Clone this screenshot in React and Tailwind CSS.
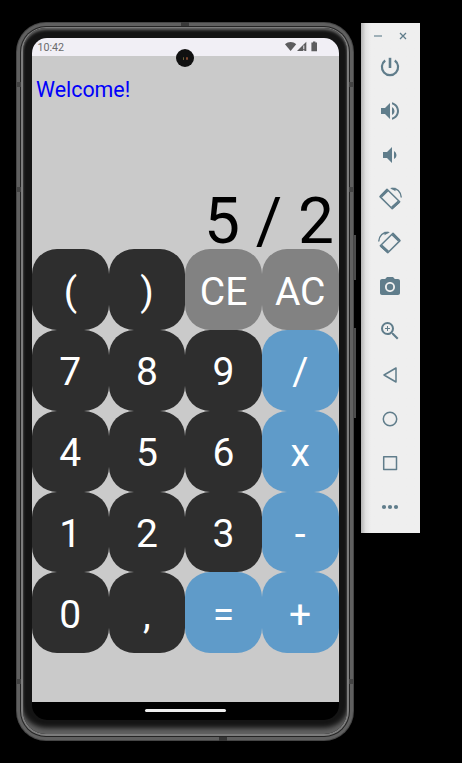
import React from "react";
import { MdVolumeUp, MdVolumeDown, MdPhotoCamera, MdZoomIn } from "react-icons/md";

const KEYS = [
  ["(", ")", "CE", "AC"],
  ["7", "8", "9", "/"],
  ["4", "5", "6", "x"],
  ["1", "2", "3", "-"],
  ["0", ",", "=", "+"],
];

function keyColor(label) {
  if (label === "CE" || label === "AC") return "bg-[#828282]";
  if (["/", "x", "-", "=", "+"].includes(label)) return "bg-[#5f9bc9]";
  return "bg-[#2e2e2e]";
}

function Key({ label }) {
  return (
    <button
      className={`flex items-center justify-center rounded-[25px] pt-[5px] text-[39px] leading-none text-white ${keyColor(label)}`}
    >
      {label}
    </button>
  );
}

function StatusBar() {
  return (
    <div className="flex h-[17.5px] shrink-0 items-center justify-between bg-[#f1eff5] pl-[5.5px] pr-[21px]">
      <span className="pt-[3px] text-[10.7px] leading-none text-[#6a6a6c]">10:42</span>
      <svg width="33" height="11" viewBox="0 0 33 11" fill="#5c5c5e">
        <path d="M0 3.2C3.4.1 7.8.1 11.200 3.200L5.600 10z" />
        <path d="M21.300 .7V10H12z" />
        <path d="M18.300 4.500h1v3.500h-1zM18.300 8.800h1v1.200h-1z" fill="#f1eff5" />
        <path d="M28 .5h2.400v1h1.600v8.700h-5.600V1.500H28z" />
      </svg>
    </div>
  );
}

function Screen() {
  return (
    <div className="flex h-[682px] w-[307px] flex-col overflow-hidden rounded-[15px] bg-black">
      <StatusBar />
      <div className="flex h-[646.5px] shrink-0 flex-col bg-[#cacaca]">
        <div className="pl-[4px] pt-[21.500px] text-[21.400px] leading-[26px] text-[#0000fa]">
          Welcome!
        </div>
        <div className="mt-[80px] h-[66.300px] whitespace-pre pr-[5px] text-right text-[64px] leading-[77px] text-black">
          5 / 2
        </div>
        <div className="grid h-[404px] w-[306.500px] shrink-0 grid-cols-4 grid-rows-5">
          {KEYS.flat().map((k) => (
            <Key key={k} label={k} />
          ))}
        </div>
      </div>
      <div className="flex flex-1 items-center justify-center pb-px">
        <div className="h-[3px] w-[81px] rounded-full bg-[#efefef]" />
      </div>
    </div>
  );
}

function Phone() {
  return (
    <div className="relative ml-[16px] mt-[22px] h-[719px] w-[338px] rounded-[30px] bg-[#464646] p-px">
      <div className="absolute left-[338px] top-[213px] h-[45px] w-[2px] bg-[#4c4c4c]" />
      <div className="absolute left-[338px] top-[306px] h-[90px] w-[2px] bg-[#4c4c4c]" />
      <div className="h-full rounded-[29px] bg-[#606060] p-[3px]">
        <div className="h-full rounded-[26px] bg-[#242424] p-px">
          <div className="h-full rounded-[25px] bg-[#7c7c7c] px-[2px] pb-[2px] pt-[1px]">
            <div className="h-full rounded-[23px] bg-[#141414] px-[9px] pt-[10px] shadow-[inset_0_-8px_5px_-2px_#626262,inset_0_3px_3px_-1px_#666,inset_0_0_2px_#444]">
              <Screen />
            </div>
          </div>
        </div>
      </div>
      <div className="absolute left-[160px] top-[27px] flex h-[18px] w-[18px] items-center justify-center gap-[2px] rounded-full bg-[#111]">
        <span className="h-[3px] w-[1.500px] rounded-full bg-[#6b6238]" />
        <span className="h-[3px] w-[1.500px] rounded-full bg-[#81452e]" />
      </div>
      <div className="absolute left-[165px] top-0 h-[4px] w-[8px] bg-[#3a3a3a]" />
      <div className="absolute left-[203px] top-[715px] h-[4px] w-[8px] bg-[#363636]" />
      <div className="absolute left-[1px] top-[60px] h-[5px] w-[4px] bg-[#444]" />
      <div className="absolute left-[333px] top-[60px] h-[5px] w-[4px] bg-[#444]" />
      <div className="absolute left-[1px] top-[165px] h-[5px] w-[4px] bg-[#444]" />
      <div className="absolute left-[333px] top-[165px] h-[5px] w-[4px] bg-[#444]" />
      <div className="absolute left-[1px] top-[657px] h-[5px] w-[4px] bg-[#444]" />
      <div className="absolute left-[333px] top-[657px] h-[5px] w-[4px] bg-[#444]" />
    </div>
  );
}

function PowerIcon() {
  return (
    <svg width="24" height="24" viewBox="0 0 24 24" fill="none" stroke="currentColor">
      <path d="M12 2.800V13" strokeWidth="2.600" />
      <path d="M7.200 5.500A8.100 8.100 0 1 0 16.800 5.500" strokeWidth="2.200" />
    </svg>
  );
}

function RotateIcon({ flip }) {
  return (
    <svg
      width="24"
      height="24"
      viewBox="0 0 24 24"
      fill="none"
      stroke="currentColor"
      className={flip ? "-scale-x-100" : ""}
    >
      <path d="M9 2.300L21.700 14.800L14.200 21.700L2 9.600z" strokeWidth="1.500" strokeLinejoin="round" />
      <path d="M9.500 3.200L3 9.400M20.900 14.600L14 20.800" strokeWidth="2.800" />
      <path d="M13.500 1.500C19 .9 22.800 4.700 23.300 10.500" strokeWidth="1.400" />
      <path d="M12 1L17.500 .7L17.500 4.200z" fill="currentColor" stroke="none" />
    </svg>
  );
}

function Outline({ d }) {
  return (
    <svg width="24" height="24" viewBox="0 0 24 24" fill="none" stroke="currentColor" strokeWidth="1.500" strokeLinejoin="round">
      <path d={d} />
    </svg>
  );
}

function Toolbar() {
  return (
    <div className="ml-[7px] mt-[23px] flex h-[510px] w-[59px] flex-col items-center bg-[#efefef] bg-linear-to-r from-[#b4b4b4] via-[#e2e2e2] via-[8%] to-[#efefef] to-[17%] text-[#607d8b]">
      <div className="flex h-[22px] w-full items-center justify-between pl-[13px] pr-[13px] pt-[4px]">
        <div className="h-[2px] w-[8px] bg-[#9fb0b8]" />
        <svg width="8" height="8" viewBox="0 0 8 8" stroke="currentColor" strokeWidth="1.300">
          <path d="M1 1L7 7M7 1L1 7" />
        </svg>
      </div>
      <div className="flex h-[484px] w-full flex-col items-center justify-around pr-px">
        <PowerIcon />
        <MdVolumeUp size={24} />
        <MdVolumeDown size={24} />
        <RotateIcon />
        <RotateIcon flip />
        <MdPhotoCamera size={24} />
        <MdZoomIn size={24} />
        <Outline d="M6 12L18 5v14z" />
        <Outline d="M12 5.300a6.700 6.700 0 1 0 0 13.400a6.700 6.700 0 1 0 0-13.400z" />
        <Outline d="M5.700 5.700h12.800v12.800h-12.800z" />
        <svg width="24" height="24" viewBox="0 0 24 24" fill="currentColor">
          <circle cx="6" cy="12" r="2.100" />
          <circle cx="12" cy="12" r="2.100" />
          <circle cx="18" cy="12" r="2.100" />
        </svg>
      </div>
    </div>
  );
}

export default function App() {
  return (
    <div className="flex h-[763px] w-[462px] items-start overflow-hidden bg-black font-[Roboto,sans-serif]">
      <Phone />
      <Toolbar />
    </div>
  );
}
